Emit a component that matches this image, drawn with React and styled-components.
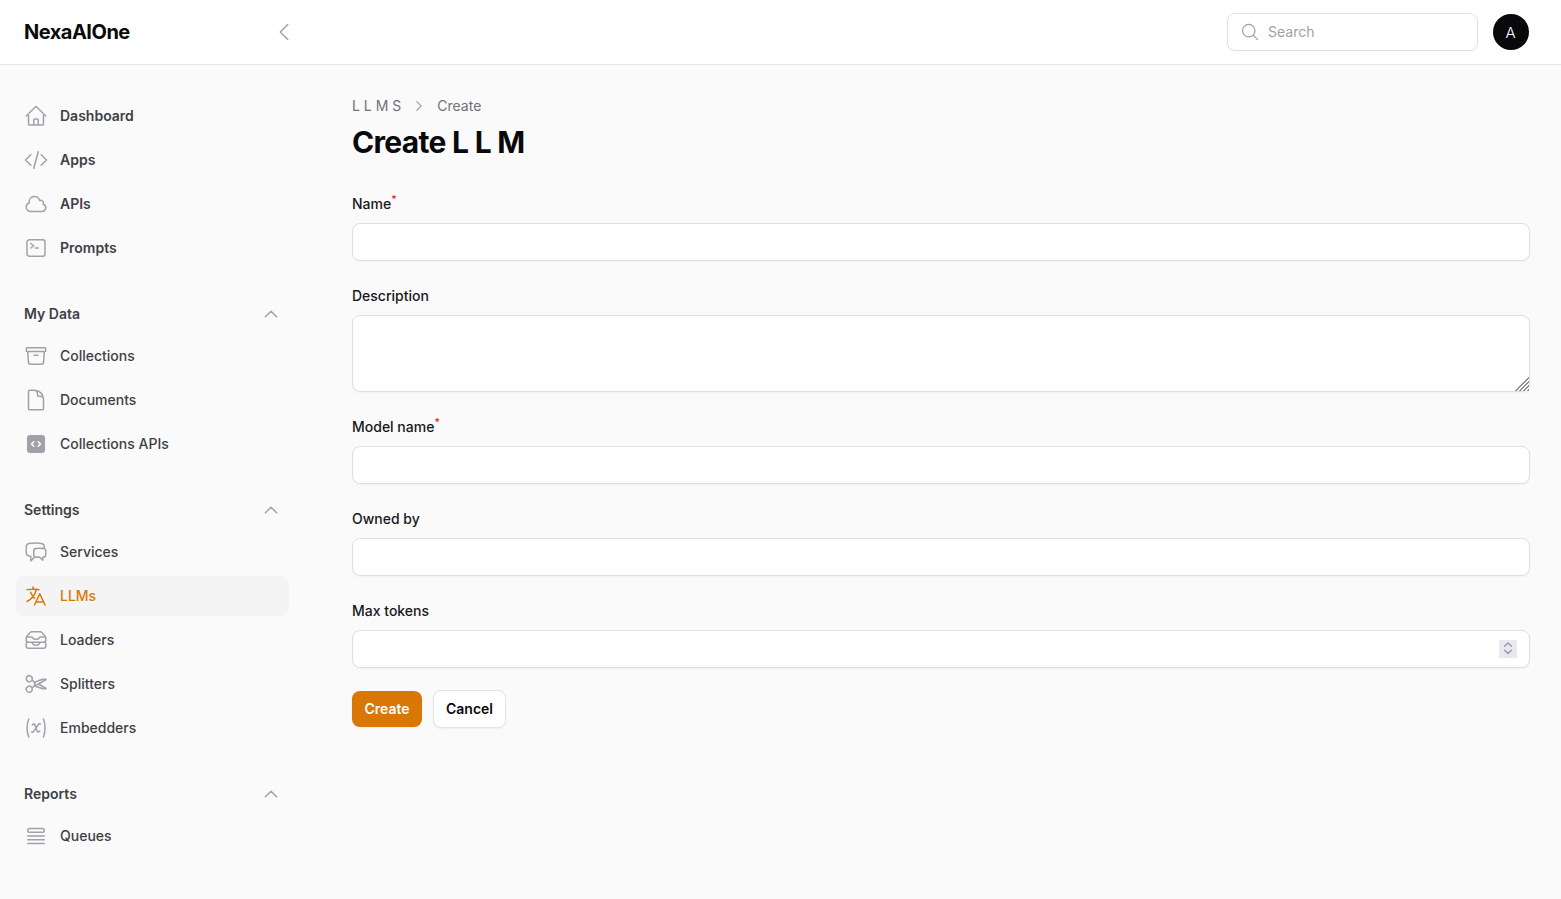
import React from "react";
import styled, { createGlobalStyle } from "styled-components";
import {
  HiOutlineHome,
  HiOutlineCodeBracket,
  HiOutlineCloud,
  HiOutlineCommandLine,
  HiOutlineArchiveBox,
  HiOutlineDocument,
  HiCodeBracketSquare,
  HiOutlineChatBubbleLeftRight,
  HiOutlineLanguage,
  HiOutlineInboxStack,
  HiOutlineScissors,
  HiOutlineVariable,
  HiOutlineQueueList,
  HiOutlineChevronUp,
  HiOutlineChevronLeft,
  HiOutlineChevronRight,
  HiOutlineMagnifyingGlass,
} from "react-icons/hi2";

const navGroups = [
  {
    items: [
      { label: "Dashboard", icon: HiOutlineHome, strong: true },
      { label: "Apps", icon: HiOutlineCodeBracket, strong: true },
      { label: "APIs", icon: HiOutlineCloud, strong: true },
      { label: "Prompts", icon: HiOutlineCommandLine, strong: true },
    ],
  },
  {
    title: "My Data",
    items: [
      { label: "Collections", icon: HiOutlineArchiveBox },
      { label: "Documents", icon: HiOutlineDocument },
      { label: "Collections APIs", icon: HiCodeBracketSquare },
    ],
  },
  {
    title: "Settings",
    items: [
      { label: "Services", icon: HiOutlineChatBubbleLeftRight },
      { label: "LLMs", icon: HiOutlineLanguage, active: true },
      { label: "Loaders", icon: HiOutlineInboxStack },
      { label: "Splitters", icon: HiOutlineScissors },
      { label: "Embedders", icon: HiOutlineVariable },
    ],
  },
  {
    title: "Reports",
    items: [{ label: "Queues", icon: HiOutlineQueueList }],
  },
];

const App = () => {
  return (
    <Page>
      <GlobalStyle />
      <TopBar>
        <Brand>
          <Logo>NexaAIOne</Logo>
          <CollapseButton type="button" aria-label="Collapse sidebar">
            <HiOutlineChevronLeft size={24} />
          </CollapseButton>
        </Brand>
        <TopActions>
          <SearchBox>
            <HiOutlineMagnifyingGlass size={20} />
            <SearchInput placeholder="Search" />
          </SearchBox>
          <Avatar>A</Avatar>
        </TopActions>
      </TopBar>
      <Body>
        <Sidebar>
          {navGroups.map((group, i) => (
            <NavGroup key={i}>
              {group.title && (
                <GroupTitle>
                  {group.title}
                  <HiOutlineChevronUp size={18} strokeWidth={2} />
                </GroupTitle>
              )}
              <NavList>
                {group.items.map((item) => {
                  const Icon = item.icon;
                  return (
                    <NavItem key={item.label} $active={item.active} $strong={item.strong}>
                      <Icon size={24} />
                      {item.label}
                    </NavItem>
                  );
                })}
              </NavList>
            </NavGroup>
          ))}
        </Sidebar>
        <Main>
          <Breadcrumbs>
            <span>L L M S</span>
            <HiOutlineChevronRight size={14} strokeWidth={2} />
            <span>Create</span>
          </Breadcrumbs>
          <Title>Create L L M</Title>
          <Form>
            <Field>
              <Label>
                Name<Required>*</Required>
              </Label>
              <TextInput type="text" />
            </Field>
            <Field>
              <Label>Description</Label>
              <TextArea />
            </Field>
            <Field>
              <Label>
                Model name<Required>*</Required>
              </Label>
              <TextInput type="text" />
            </Field>
            <Field>
              <Label>Owned by</Label>
              <TextInput type="text" />
            </Field>
            <Field>
              <Label>Max tokens</Label>
              <NumberWrap>
                <NumberInput type="number" />
                <Spinner aria-hidden="true">
                  <svg width="18" height="18" viewBox="0 0 18 18" fill="none" stroke="#9a9aa8" strokeWidth="1.5" strokeLinecap="round" strokeLinejoin="round">
                    <path d="M5.5 6.2 9 3 12.5 6.2" />
                    <path d="M5.5 10.2 9 13.4 12.5 10.2" />
                  </svg>
                </Spinner>
              </NumberWrap>
            </Field>
            <Actions>
              <PrimaryButton type="button">Create</PrimaryButton>
              <SecondaryButton type="button">Cancel</SecondaryButton>
            </Actions>
          </Form>
        </Main>
      </Body>
    </Page>
  );
};

export default App;

const GlobalStyle = createGlobalStyle`
  * {
    box-sizing: border-box;
  }
  html, body {
    margin: 0;
    padding: 0;
    background: #fafafa;
    font-family: Inter, "Liberation Sans", sans-serif;
    overflow: hidden;
  }
`;

const Page = styled.div`
  height: 899px;
  overflow: hidden;
  display: flex;
  flex-direction: column;
  background: #fafafa;
`;

const TopBar = styled.header`
  height: 65px;
  flex: none;
  display: flex;
  align-items: center;
  justify-content: space-between;
  padding: 0 32px 0 24px;
  background: #fff;
  border-bottom: 1px solid #e5e5e6;
`;

const Brand = styled.div`
  width: 272px;
  display: flex;
  align-items: center;
  justify-content: space-between;
`;

const Logo = styled.div`
  font-size: 20px;
  line-height: 20px;
  font-weight: 700;
  letter-spacing: -0.5px;
  color: #0a0a0b;
`;

const CollapseButton = styled.button`
  width: 24px;
  height: 24px;
  padding: 0;
  border: 0;
  background: none;
  color: #a1a1aa;
  display: flex;
`;

const TopActions = styled.div`
  display: flex;
  align-items: center;
  gap: 15px;
`;

const SearchBox = styled.label`
  width: 251px;
  height: 38px;
  display: flex;
  align-items: center;
  gap: 8px;
  padding: 0 12px;
  background: #fff;
  border: 1px solid #e2e2e4;
  border-radius: 8px;
  color: #a1a1aa;
  box-shadow: 0 1px 2px rgba(0, 0, 0, 0.03);
`;

const SearchInput = styled.input`
  flex: 1;
  min-width: 0;
  border: 0;
  outline: 0;
  padding: 0;
  background: none;
  font: 400 14px/20px Inter, sans-serif;
  color: #18181b;
  &::placeholder {
    color: #a1a1aa;
    opacity: 1;
  }
`;

const Avatar = styled.div`
  width: 36px;
  height: 36px;
  padding-right: 1px;
  border-radius: 50%;
  background: #09090b;
  color: #fff;
  display: flex;
  align-items: center;
  justify-content: center;
  font-size: 15px;
  font-weight: 300;
`;

const Body = styled.div`
  flex: 1;
  display: flex;
  min-height: 0;
`;

const Sidebar = styled.nav`
  width: 320px;
  flex: none;
  display: flex;
  flex-direction: column;
  gap: 36px;
  padding: 31px 31px 0 16px;
`;

const NavGroup = styled.div`
  display: flex;
  flex-direction: column;
  gap: 12px;
`;

const GroupTitle = styled.div`
  height: 20px;
  display: flex;
  align-items: center;
  justify-content: space-between;
  padding: 0 9px 0 8px;
  font-size: 14px;
  line-height: 20px;
  font-weight: 600;
  color: #3f3f46;
  svg {
    color: #a1a1aa;
  }
`;

const NavList = styled.div`
  display: flex;
  flex-direction: column;
  gap: 4px;
`;

const NavItem = styled.a`
  height: 40px;
  display: flex;
  align-items: center;
  gap: 12px;
  padding: 0 8px;
  border-radius: 8px;
  font-size: 14px;
  line-height: 20px;
  font-weight: ${(p) => (p.$strong ? 600 : 500)};
  color: ${(p) => (p.$active ? "#d97706" : "#3f3f46")};
  background: ${(p) => (p.$active ? "#f4f4f5" : "transparent")};
  svg {
    flex: none;
    color: ${(p) => (p.$active ? "#d97706" : "#a1a1aa")};
  }
`;

const Main = styled.main`
  flex: 1;
  min-width: 0;
  padding: 31px 31px 0 32px;
`;

const Breadcrumbs = styled.div`
  height: 20px;
  display: flex;
  align-items: center;
  gap: 11px;
  font-size: 14px;
  line-height: 20px;
  color: #71717a;
  svg {
    color: #a1a1aa;
  }
`;

const Title = styled.h1`
  margin: 8px 0 0;
  font-size: 30px;
  line-height: 36px;
  font-weight: 700;
  letter-spacing: -0.7px;
  color: #09090b;
`;

const Form = styled.form`
  margin-top: 34px;
  display: flex;
  flex-direction: column;
  gap: 25px;
`;

const Field = styled.div`
  display: flex;
  flex-direction: column;
  gap: 9px;
`;

const Label = styled.label`
  font-size: 14px;
  line-height: 20px;
  font-weight: 500;
  color: #18181b;
`;

const Required = styled.sup`
  color: #dc2626;
  font-size: 10.5px;
  line-height: 0;
  font-weight: 500;
`;

const TextInput = styled.input`
  display: block;
  width: 100%;
  height: 38px;
  padding: 0 12px;
  background: #fff;
  border: 1px solid #dfdfe1;
  border-radius: 8px;
  outline: 0;
  font: 400 14px/20px Inter, sans-serif;
  box-shadow: 0 1px 2px rgba(0, 0, 0, 0.04);
`;

const NumberWrap = styled.div`
  position: relative;
`;

const NumberInput = styled(TextInput)`
  appearance: textfield;
  &::-webkit-inner-spin-button {
    appearance: none;
  }
`;

const Spinner = styled.span`
  position: absolute;
  top: 10px;
  right: 13px;
  width: 18px;
  height: 18px;
  display: flex;
  background: #e8e8ee;
`;

const TextArea = styled.textarea`
  display: block;
  width: 100%;
  height: 77px;
  padding: 8px 12px;
  background: #fff;
  border: 1px solid #dfdfe1;
  border-radius: 8px;
  outline: 0;
  font: 400 14px/20px Inter, sans-serif;
  box-shadow: 0 1px 2px rgba(0, 0, 0, 0.04);
  &::-webkit-resizer {
    background:
      linear-gradient(135deg, #fff 50%, transparent 50%),
      repeating-linear-gradient(135deg, #8a8a8a 0 1px, #fff 1px 2.8px);
  }
`;

const Actions = styled.div`
  margin-top: -3px;
  display: flex;
  align-items: center;
  gap: 11px;
`;

const PrimaryButton = styled.button`
  width: 70px;
  height: 36px;
  padding: 0;
  border: 0;
  border-radius: 8px;
  background: #d97706;
  color: #fff;
  font: 600 14px/20px Inter, sans-serif;
  box-shadow: 0 1px 2px rgba(0, 0, 0, 0.05);
`;

const SecondaryButton = styled.button`
  height: 38px;
  padding: 0 12px;
  border: 1px solid #e4e4e7;
  border-radius: 8px;
  background: #fff;
  color: #09090b;
  font: 600 14px/20px Inter, sans-serif;
  box-shadow: 0 1px 2px rgba(0, 0, 0, 0.05);
`;
